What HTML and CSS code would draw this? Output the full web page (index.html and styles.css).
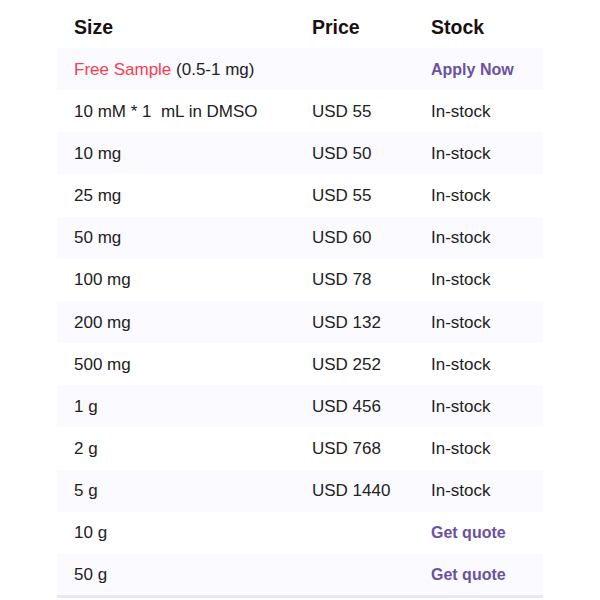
FILE: index.html
```html
<!DOCTYPE html>
<html>
<head>
<meta charset="utf-8">
<link rel="stylesheet" href="styles.css">
</head>
<body>
<table class="prices">
  <thead>
    <tr><th class="c-size">Size</th><th class="c-price">Price</th><th class="c-stock">Stock</th></tr>
  </thead>
  <tbody>
    <tr class="alt"><td><span class="free">Free Sample</span> (0.5-1 mg)</td><td></td><td><a class="link">Apply Now</a></td></tr>
    <tr><td>10 mM * 1 &nbsp;mL in DMSO</td><td>USD 55</td><td>In-stock</td></tr>
    <tr class="alt"><td>10 mg</td><td>USD 50</td><td>In-stock</td></tr>
    <tr><td>25 mg</td><td>USD 55</td><td>In-stock</td></tr>
    <tr class="alt"><td>50 mg</td><td>USD 60</td><td>In-stock</td></tr>
    <tr><td>100 mg</td><td>USD 78</td><td>In-stock</td></tr>
    <tr class="alt"><td>200 mg</td><td>USD 132</td><td>In-stock</td></tr>
    <tr><td>500 mg</td><td>USD 252</td><td>In-stock</td></tr>
    <tr class="alt"><td>1 g</td><td>USD 456</td><td>In-stock</td></tr>
    <tr><td>2 g</td><td>USD 768</td><td>In-stock</td></tr>
    <tr class="alt"><td>5 g</td><td>USD 1440</td><td>In-stock</td></tr>
    <tr><td>10 g</td><td></td><td><a class="link">Get quote</a></td></tr>
    <tr class="alt"><td>50 g</td><td></td><td><a class="link">Get quote</a></td></tr>
  </tbody>
</table>
</body>
</html>
```
FILE: styles.css
```css
html, body {
  margin: 0;
  padding: 0;
  background: #ffffff;
}
body {
  font-family: "Liberation Sans", Arial, sans-serif;
  color: #222222;
}
.prices {
  margin-left: 57px;
  width: 486px;
  border-collapse: collapse;
  border-bottom: 3px solid #e9e5f5;
}
.prices th {
  height: 48px;
  padding: 7px 0 0 17px;
  text-align: left;
  font-size: 19.5px;
  font-weight: bold;
  color: #1a1010;
  box-sizing: border-box;
  vertical-align: middle;
}
.prices td {
  height: 42.17px;
  padding: 1px 0 0 17px;
  font-size: 17px;
  color: #222222;
  box-sizing: border-box;
  vertical-align: middle;
}
.c-size { width: 238px; }
.c-price { width: 119px; }
.prices tr.alt td {
  background: #fbfaff;
}
.free {
  color: #f73c4e;
}
.prices .link {
  color: #6a52a3;
  font-weight: bold;
  font-size: 16px;
}
```
